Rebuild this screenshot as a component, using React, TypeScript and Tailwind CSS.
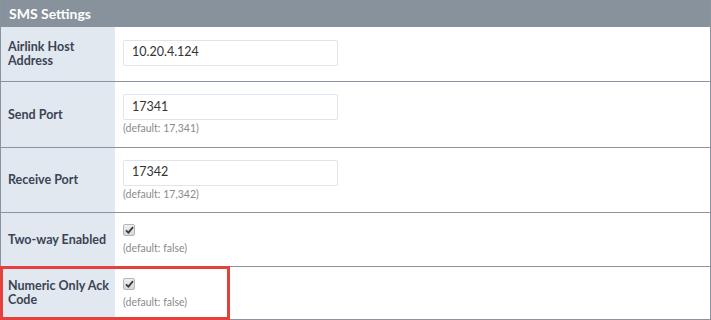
import React from "react";

const font = { fontFamily: "Lato, 'Open Sans', sans-serif" };

function Check() {
  return (
    <div className="w-[12px] h-[12px] rounded-[2px] border border-[#b5b5b5] bg-gradient-to-b from-[#f0f0f0] to-[#d6d6d6] flex items-center justify-center">
      <svg width="9" height="8" viewBox="0 0 9 8">
        <path d="M1 4.3 L3.4 6.6 L8 1.2" fill="none" stroke="#3a3a3a" strokeWidth="1.8" />
      </svg>
    </div>
  );
}

function Row({
  label,
  h,
  children,
}: {
  label: React.ReactNode;
  h: string;
  children: React.ReactNode;
}) {
  return (
    <div className={`flex border-b border-[#8a949e] ${h}`}>
      <div className="w-[114px] shrink-0 bg-[#e1e8ef] flex items-center pl-[7px] whitespace-nowrap text-[12.5px] leading-[14px] font-bold text-[#3b4454]">
        {label}
      </div>
      <div className="flex-1 pl-[8px] flex flex-col justify-center">{children}</div>
    </div>
  );
}

function Input({ value }: { value: string }) {
  return (
    <div className="w-[215px] h-[26px] border border-[#dfe5eb] rounded-[2px] bg-white flex items-center pl-[8px] text-[12.5px] text-[#333]">
      {value}
    </div>
  );
}

function Def({ text }: { text: string }) {
  return <div className="text-[10.5px] leading-[13px] text-[#8a8a8a] mt-[2px]">{text}</div>;
}

export default function App() {
  return (
    <div className="relative w-[711px] h-[320px] bg-white" style={font}>
      <div className="border-l border-r border-[#8a949e]">
        <div className="h-[27px] bg-[#87929d] flex items-center pl-[8px] text-white font-bold text-[14px]">
          SMS Settings
        </div>
        <Row label={<span>Airlink Host<br />Address</span>} h="h-[55px]">
          <div className="mb-[3px]">
            <Input value="10.20.4.124" />
          </div>
        </Row>
        <Row label="Send Port" h="h-[66px]">
          <Input value="17341" />
          <Def text="(default: 17,341)" />
        </Row>
        <Row label="Receive Port" h="h-[65px]">
          <Input value="17342" />
          <Def text="(default: 17,342)" />
        </Row>
        <Row label="Two-way Enabled" h="h-[54px]">
          <Check />
          <div className="mt-[4px]">
            <Def text="(default: false)" />
          </div>
        </Row>
        <Row label={<span>Numeric Only Ack<br />Code</span>} h="h-[53px]">
          <Check />
          <div className="mt-[4px]">
            <Def text="(default: false)" />
          </div>
        </Row>
      </div>
      <div className="absolute left-0 top-[266px] w-[230px] h-[54px] border-[3px] border-[#e5403b]" />
    </div>
  );
}
